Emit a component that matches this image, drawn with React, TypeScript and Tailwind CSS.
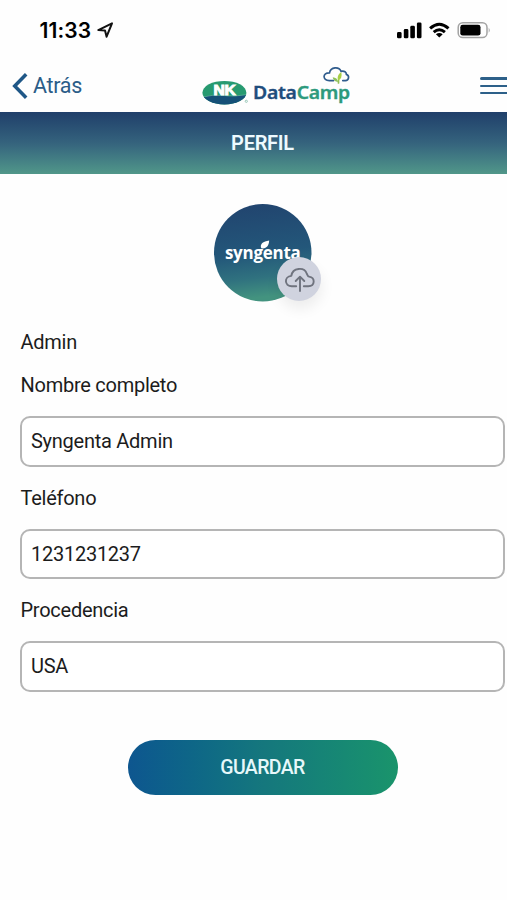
import { useState } from 'react';

function StatusBar() {
  return (
    <div className="flex h-[60px] items-center justify-between pl-[39.5px] pr-[34px]">
      <div className="flex items-center gap-[5px]">
        <span className="font-[Inter,sans-serif] text-[21px] font-semibold leading-none tracking-[0.1px] text-black">11:33</span>
        <svg viewBox="0 0 18 18" className="h-[18px] w-[18px]" fill="none" stroke="#111" strokeWidth="2" strokeLinejoin="round">
          <path d="M16 2.4 10.6 15.7 9 9.4 2.3 9.1Z" />
        </svg>
      </div>
      <svg viewBox="396 20 95 20" className="h-5 w-[95px]">
        <g fill="#000">
          <rect x="397" y="32" width="4.6" height="6.3" rx="1.4" />
          <rect x="403.8" y="29" width="4.6" height="9.3" rx="1.4" />
          <rect x="410.3" y="25.8" width="4.6" height="12.5" rx="1.4" />
          <rect x="416.9" y="22.4" width="4.6" height="15.9" rx="1.4" />
        </g>
        <g fill="none" stroke="#000" strokeWidth="3">
          <path d="M430.1 28.4q9.2-8.2 18.4 0" />
          <path d="M433.7 32.1q5.6-4.8 11.2 0" />
        </g>
        <path d="M439.3 37.6 435.9 34.3q3.4-2.5 6.8 0Z" fill="#000" />
        <rect x="458.2" y="22.8" width="28.8" height="14.8" rx="4.6" fill="none" stroke="#a3a3a3" strokeWidth="1.5" />
        <rect x="460.3" y="24.8" width="20.2" height="10.8" rx="2.4" fill="#000" />
        <path d="M488.7 27.7q2.2 2.5 0 5Z" fill="#aaa" />
      </svg>
    </div>
  );
}

function Logo() {
  return (
    <svg viewBox="200 64 154 44" className="h-11 w-[154px]">
      <defs>
        <clipPath id="oval">
          <ellipse cx="224.4" cy="92.7" rx="22" ry="11.8" />
        </clipPath>
      </defs>
      <g clipPath="url(#oval)">
        <rect x="202" y="80" width="46" height="26" fill="#279a70" />
        <path d="M202 97.5q10-3 21-1.8 13 1.4 24-.9V106H202Z" fill="#155078" />
        <path d="M202 97.3q10-3 21-1.8 13 1.4 24-.9" fill="none" stroke="#7fbfae" strokeWidth=".5" />
      </g>
      <text x="213.5" y="94.8" textLength="22" lengthAdjust="spacingAndGlyphs" fill="#fff" stroke="#fff" strokeWidth="1" className="font-['Liberation_Sans',sans-serif] text-[14.5px] font-bold">NK</text>
      <circle cx="246.3" cy="101.3" r="1.1" fill="none" stroke="#78b5a0" strokeWidth=".7" />
      <text x="253" y="98.8" textLength="97" lengthAdjust="spacingAndGlyphs" strokeWidth=".35" className="font-['Noto_Sans',sans-serif] text-[18.5px] font-semibold">
        <tspan fill="#1f4d7c" stroke="#1f4d7c">Data</tspan><tspan fill="#2d9a7d" stroke="#2d9a7d">Camp</tspan>
      </text>
      <g fill="none" strokeWidth="1.7" strokeLinecap="round">
        <path d="M333.5 80.6h-4.2c-7 0-7-8 .2-7.8 1.2-6.1 9.6-6.4 11.5-1.5 3.5-.8 5.4 1.1 5.4 3.1 3.4 1.2 2.6 6.2-1 6.2h-2.6" stroke="#305c8d" />
        <path d="M338.5 83v-3" stroke="#93bf55" />
      </g>
      <path d="M338.3 80.7c-1.8-4 .5-7.2 3-8.5.9 4-.1 7-3 8.5Z" fill="#a8cf45" />
      <path d="M338 82c-3-.2-5-2-5.3-4.7 3 .2 5 1.8 5.3 4.7Z" fill="#8fc25a" />
    </svg>
  );
}

function Header() {
  return (
    <header className="flex h-[51.5px] items-center justify-between">
      <button className="flex w-[200px] items-center gap-[5px] pl-3 text-left text-[21.5px] leading-none tracking-[-0.3px] text-[#2b5d88]">
        <svg viewBox="0 0 16 26" className="h-[26px] w-4" fill="none" stroke="#1f5787" strokeWidth="3.5">
          <path d="M14.2 1.2 2.7 13l11.5 11.8" />
        </svg>
        Atrás
      </button>
      <Logo />
      <button aria-label="Menu" className="flex w-[171px] flex-col items-end gap-[4.8px] pr-3.5">
        <span className="h-[2.4px] w-[31px] rounded-full bg-[#2d6089]" />
        <span className="h-[2.4px] w-[31px] rounded-full bg-[#2d6089]" />
        <span className="h-[2.4px] w-[31px] rounded-full bg-[#2d6089]" />
      </button>
    </header>
  );
}

function Avatar() {
  return (
    <div className="relative mx-auto mt-[29.5px] h-[97.5px] w-[97.5px]">
      <svg viewBox="213.5 203.5 98 98" className="h-full w-full overflow-visible">
        <defs>
          <linearGradient id="avatar" x1="0" y1="0" x2="0.12" y2="1">
            <stop offset="0" stopColor="#21436e" />
            <stop offset=".55" stopColor="#23577a" />
            <stop offset=".8" stopColor="#30727f" />
            <stop offset="1" stopColor="#43937f" />
          </linearGradient>
        </defs>
        <circle cx="262.5" cy="252.5" r="49" fill="url(#avatar)" />
        <text x="224.5" y="258.8" textLength="76" lengthAdjust="spacingAndGlyphs" fill="#fff" className="font-['Open_Sans',sans-serif] text-[18.5px] font-bold">syngenta</text>
        <path d="M261 248c-1.8-4.2 1.8-7 8-7.8-.4 5.2-2.6 8.6-8 7.8Z" fill="#fff" />
      </svg>
      <button aria-label="Subir foto" className="absolute left-[63.5px] top-[53.5px] flex h-11 w-11 items-center justify-center rounded-full bg-[#d0d3df] shadow-[1px_8px_14px_rgba(0,0,0,0.07)]">
        <svg viewBox="0 0 32 26" className="mt-0.5 ml-0.5 h-[26px] w-8" fill="none" stroke="#6f737e" strokeWidth="1.9" strokeLinecap="round" strokeLinejoin="round">
          <path d="M12.2 19.2H7.8C.3 19.2-.2 9.6 7.3 8.9 8.6.5 20.3-.4 22.8 6.7c1.1 2 .9 2.7 2.2 2.9 6.5.9 6.2 9.6-.7 9.6h-4.5" />
          <path d="M16 24V10M11.7 14 16 9.7l4.3 4.3" />
        </svg>
      </button>
    </div>
  );
}

function Field({ label, value, onChange }: { label: string; value: string; onChange: (value: string) => void }) {
  return (
    <label className="block">
      <span className="block h-[30px] pl-[0.5px] leading-[30px]">{label}</span>
      <input
        value={value}
        onChange={(e) => onChange(e.target.value)}
        className="mt-4 block h-[50.5px] w-full rounded-[10px] border-2 border-[#b5b5b5] bg-white px-[9px] outline-none"
      />
    </label>
  );
}

export default function App() {
  const [name, setName] = useState('Syngenta Admin');
  const [phone, setPhone] = useState('1231231237');
  const [origin, setOrigin] = useState('USA');

  return (
    <div className="h-[900px] w-full overflow-hidden bg-[#fefefe] font-[Roboto,sans-serif] text-[20px] tracking-[-0.26px] text-[#1c1c1c]">
      <div className="w-[525px]">
        <StatusBar />
        <Header />
        <div className="flex h-[62.5px] items-center justify-center bg-linear-to-b from-[#203f6a] via-[#35637d] to-[#519789] text-[20px] font-semibold text-[#eefaff]">
          PERFIL
        </div>
        <main className="px-5">
          <Avatar />
          <p className="mt-[26px] h-[30px] pl-[0.5px] leading-[30px]">Admin</p>
          <form className="mt-[13px] flex flex-col gap-4" onSubmit={(e) => e.preventDefault()}>
            <Field label="Nombre completo" value={name} onChange={setName} />
            <Field label="Teléfono" value={phone} onChange={setPhone} />
            <Field label="Procedencia" value={origin} onChange={setOrigin} />
            <button className="mx-auto mt-8 h-[55px] w-[270px] rounded-full bg-linear-to-r from-[#0e568f] via-[#15777d] to-[#1a946b] pt-px text-[19.5px] font-medium tracking-[-0.6px] text-[#e6f8fa]">
              GUARDAR
            </button>
          </form>
        </main>
      </div>
    </div>
  );
}
